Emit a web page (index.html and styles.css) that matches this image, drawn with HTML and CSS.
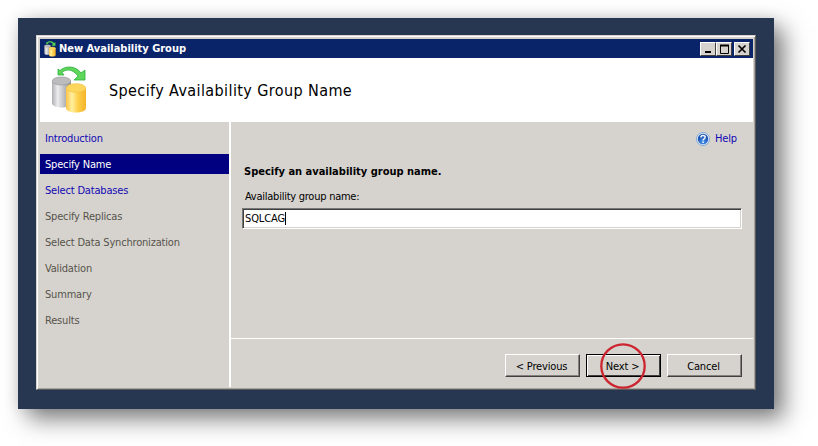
FILE: index.html
```html
<!DOCTYPE html>
<html lang="en">
<head>
<meta charset="utf-8">
<title>New Availability Group</title>
<link rel="stylesheet" href="styles.css">
</head>
<body>
<svg class="defs" width="0" height="0" aria-hidden="true">
  <defs>
    <linearGradient id="silver"><stop offset="0" stop-color="#b0b0b2"/><stop offset=".3" stop-color="#ececee"/><stop offset="1" stop-color="#8d8d8f"/></linearGradient>
    <linearGradient id="gold"><stop offset="0" stop-color="#fbc445"/><stop offset=".3" stop-color="#fff0a0"/><stop offset=".6" stop-color="#fdce48"/><stop offset="1" stop-color="#f4b42a"/></linearGradient>
    <radialGradient id="blue" cy=".75"><stop offset="0" stop-color="#4c9cec"/><stop offset="1" stop-color="#1b52b4"/></radialGradient>
    <symbol id="databases" viewBox="0 0 36 48">
      <path d="M1 15v22c0 6 19 6 19 0V15z" fill="url(#silver)"/>
      <ellipse cx="10.500" cy="15" rx="9.300" ry="4" fill="#bcbcbe" stroke="#99999b" stroke-width=".7"/>
      <path d="M15 22v20c0 6 20 6 20 0V22z" fill="url(#gold)"/>
      <ellipse cx="25" cy="22" rx="9.700" ry="4.300" fill="#fdd75c" stroke="#f3c145" stroke-width=".7"/>
      <path d="M7 9V3l2 1.500C14-.5 25-.5 30 7l4-3v10H23l4-4C22 3 15 2.500 11 6.500L13 9z" fill="#5ed65a" stroke="#2fae3c" stroke-width=".8"/>
    </symbol>
  </defs>
</svg>
<div class="backdrop">
  <main class="window">
    <header class="titlebar">
      <svg class="app-icon"><use href="#databases"/></svg>
      <span class="caption">New Availability Group</span>
      <div class="controls">
        <span class="control"><svg viewBox="0 0 14 12"><path d="M4 9h6" stroke="#000" stroke-width="2"/></svg></span>
        <span class="control"><svg viewBox="0 0 14 12"><path d="M3.500 2v8.500h8V2" fill="none" stroke="#000"/><path d="M3 2.500h9" stroke="#000" stroke-width="2"/></svg></span>
        <span class="control close"><svg viewBox="0 0 14 12"><path d="M3.500 2.500l7 7m0-7l-7 7" stroke="#000" stroke-width="1.700"/></svg></span>
      </div>
    </header>
    <div class="banner">
      <svg class="banner-icon"><use href="#databases"/></svg>
      <h1>Specify Availability Group Name</h1>
    </div>
    <div class="body">
      <nav class="steps">
        <a class="step link">Introduction</a>
        <a class="step current">Specify Name</a>
        <a class="step link">Select Databases</a>
        <span class="step">Specify Replicas</span>
        <span class="step">Select Data Synchronization</span>
        <span class="step">Validation</span>
        <span class="step">Summary</span>
        <span class="step">Results</span>
      </nav>
      <div class="page">
        <section class="content">
          <a class="help">
            <svg viewBox="0 0 14 14"><circle cx="7" cy="7" r="6.500" fill="#e2edf8" stroke="#6d9bd0" stroke-width=".8"/><circle cx="7" cy="7" r="5.200" fill="url(#blue)"/><path d="M4.900 5.500c0-2.800 4.300-2.600 4.300-.2C9.200 6.700 7.100 6.800 7.100 8.400M7.100 9.500V11" fill="none" stroke="#fff" stroke-width="1.400"/></svg>
            <span>Help</span>
          </a>
          <h2>Specify an availability group name.</h2>
          <label class="label">Availability group name:</label>
          <div class="field"><span>SQLCAG</span><i class="caret"></i></div>
        </section>
        <footer class="actions">
          <div class="button"><span>&lt; Previous</span></div>
          <div class="button default"><span>Next &gt;</span><svg class="ring" viewBox="0 0 46 46"><circle cx="23" cy="23" r="21.700"/></svg></div>
          <div class="button"><span>Cancel</span></div>
        </footer>
      </div>
    </div>
  </main>
</div>
</body>
</html>
```
FILE: styles.css
```css
* { box-sizing: border-box; }
body {
  margin: 0;
  padding: 18px;
  width: 818px;
  height: 446px;
  overflow: hidden;
  background: #fff;
  color: #000;
  font: 11px/14px "DejaVu Sans Condensed", "DejaVu Sans", sans-serif;
  font-stretch: condensed;
}
.defs { position: absolute; }
.backdrop {
  width: 756px;
  height: 391px;
  padding: 17px 18px 19px;
  background: #283751;
  box-shadow: 10px 10px 22px rgba(0, 0, 0, .5), 0 0 14px rgba(0, 0, 0, .1);
}
.window {
  display: flex;
  flex-direction: column;
  height: 355px;
  padding: 2px;
  border: 1px solid;
  border-color: #d6d3ce #5c5c5c #5c5c5c #d6d3ce;
  box-shadow: inset 1px 1px #fff, inset -1px -1px #a5a29e;
  background: #d6d3ce;
}
.titlebar {
  display: flex;
  align-items: center;
  height: 19px;
  margin-top: 1px;
  margin-left: 1px;
  padding: 0 3px;
  background: #0a246a;
}
.app-icon { width: 14px; height: 16px; margin-right: 2px; }
.caption { color: #fff; font-weight: bold; letter-spacing: -.01px; white-space: nowrap; }
.controls { display: flex; margin-left: auto; }
.control {
  width: 16px;
  height: 14px;
  border: 1px solid;
  border-color: #fff #404040 #404040 #fff;
  background: #d6d3ce;
}
.control svg { display: block; width: 14px; height: 12px; }
.close { margin-left: 2px; }
.banner {
  display: flex;
  align-items: center;
  height: 64px;
  margin-left: 1px;
  padding-left: 11px;
  background: #fff;
}
.banner-icon { width: 36px; height: 48px; margin-right: 22px; }
h1 { margin: 2px 0 0; font-size: 16px; font-weight: normal; line-height: 20px; letter-spacing: .4px; white-space: nowrap; }
.body { display: flex; flex: 1; margin-left: 1px; }
.steps {
  display: flex;
  flex-direction: column;
  gap: 6px;
  width: 191px;
  padding-top: 6px;
  border-right: 2px solid #fff;
}
.step { height: 20px; padding-left: 5px; line-height: 22px; letter-spacing: -.18px; color: #57534c; white-space: nowrap; }
.link { color: #1208b4; }
.current { background: #000080; color: #fff; }
.page { display: flex; flex: 1; flex-direction: column; }
.content { flex: 1; padding: 10px 11px 0; }
.help { display: flex; align-items: center; gap: 5px; width: 45px; height: 14px; margin-left: auto; margin-right: 1px; letter-spacing: -.15px; color: #1208b4; }
.help svg { width: 14px; height: 14px; }
h2 { margin: 19px 0 11px 2px; font-size: 11px; line-height: 14px; white-space: nowrap; }
.label { display: block; margin: 0 0 4px 3px; letter-spacing: -.25px; }
.field {
  display: flex;
  align-items: center;
  height: 21px;
  padding-left: 2px;
  border: 1px solid;
  border-color: #777 #fff #fff #777;
  box-shadow: inset 1px 1px #404040, inset -1px -1px #d6d3ce;
  background: #fff;
  letter-spacing: -.1px;
}
.caret { width: 1px; height: 13px; background: #000; }
.actions {
  display: flex;
  gap: 6px;
  justify-content: flex-end;
  height: 49px;
  padding: 15px 11px 0 0;
  border-top: 1px solid #fff;
}
.button {
  position: relative;
  display: flex;
  align-items: center;
  justify-content: center;
  width: 75px;
  height: 23px;
  padding: 2px 2px 0 0;
  border: 1px solid;
  border-color: #fff #404040 #404040 #fff;
  box-shadow: inset -1px -1px #858280;
  letter-spacing: -.15px;
}
.default { border-color: #000; box-shadow: inset 1px 1px #fff, inset -1px -1px #404040; }
.ring { position: absolute; left: 13px; top: -12px; width: 46px; height: 46px; }
.ring circle { fill: none; stroke: #cc2530; stroke-width: 2.300; }
```
